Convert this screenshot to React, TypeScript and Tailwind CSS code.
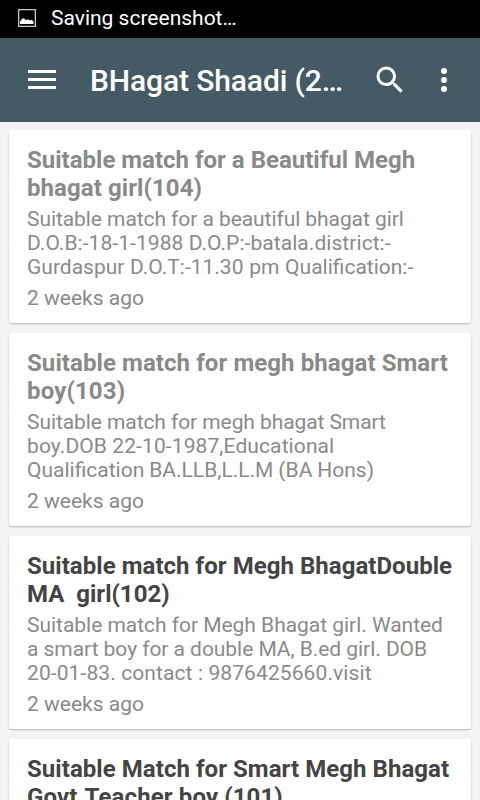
import React from "react";

type Line = { text: string; spacing?: string };
type Post = { title: Line[]; body: Line[]; read: boolean };

const posts: Post[] = [
  {
    title: [{ text: "Suitable match for a Beautiful Megh" }, { text: "bhagat girl(104)", spacing: "tracking-[0.08px]" }],
    body: [
      { text: "Suitable match for a beautiful bhagat girl", spacing: "tracking-[-0.07px]" },
      { text: "D.O.B:-18-1-1988 D.O.P:-batala.district:-", spacing: "tracking-[0.06px]" },
      { text: "Gurdaspur D.O.T:-11.30 pm Qualification:-", spacing: "[word-spacing:0.5px]" },
    ],
    read: true,
  },
  {
    title: [
      { text: "Suitable match for megh bhagat Smart", spacing: "tracking-[0.08px]" },
      { text: "boy(103)", spacing: "tracking-[0.15px]" },
    ],
    body: [
      { text: "Suitable match for megh bhagat Smart", spacing: "tracking-[-0.08px]" },
      { text: "boy.DOB 22-10-1987,Educational", spacing: "tracking-[0.1px]" },
      { text: "Qualification BA.LLB,L.L.M (BA Hons)", spacing: "[word-spacing:-0.25px]" },
    ],
    read: true,
  },
  {
    title: [{ text: "Suitable match for Megh BhagatDouble", spacing: "tracking-[0.04px]" }, { text: "MA  girl(102)" }],
    body: [
      { text: "Suitable match for Megh Bhagat girl. Wanted", spacing: "tracking-[-0.03px]" },
      { text: "a smart boy for a double MA, B.ed girl. DOB", spacing: "tracking-[-0.05px]" },
      { text: "20-01-83. contact : 9876425660.visit", spacing: "tracking-[0.1px]" },
    ],
    read: false,
  },
  {
    title: [
      { text: "Suitable Match for Smart Megh Bhagat", spacing: "tracking-[0.05px]" },
      { text: "Govt.Teacher boy (101)", spacing: "tracking-[0.12px]" },
    ],
    body: [],
    read: false,
  },
];

function Lines({ lines }: { lines: Line[] }) {
  return (
    <>
      {lines.map((line) => (
        <div key={line.text} className={line.spacing}>
          {line.text}
        </div>
      ))}
    </>
  );
}

function Card({ post }: { post: Post }) {
  return (
    <article className="h-[193px] shrink-0 rounded-[2px] bg-white px-[18px] pt-4 shadow-[0_1px_2px_rgba(0,0,0,0.25)]">
      <h2 className={`text-[24px] leading-7 font-bold whitespace-pre ${post.read ? "text-[#8a8a8a]" : "text-[#444444]"}`}>
        <Lines lines={post.title} />
      </h2>
      <div className="mt-[5px] text-[21px] leading-6 whitespace-pre text-[#8a8a8a]">
        <Lines lines={post.body} />
      </div>
      <div className="mt-[7px] text-[21px] leading-6 text-[#8a8a8a]">2 weeks ago</div>
    </article>
  );
}

export default function App() {
  return (
    <div className="flex h-[800px] w-[480px] flex-col overflow-hidden bg-[#f4f4f4] font-['Roboto',sans-serif]">
      <div className="flex h-[38px] shrink-0 items-center bg-black pb-0.5 pl-[18px] text-white">
        <svg width="18" height="18" viewBox="0 0 18 18">
          <path fill="none" stroke="#c8c8c8" strokeWidth="1.3" d="M.65.65h16.700v16.700H.65z" />
          <path fill="#fff" d="M2 15v-2.500l2.500-3 1.500-.3 2 2 1.800-1 2.200 1.300 1.800-.7 1.700 2V15z" />
        </svg>
        <span className="ml-[15px] text-[21px] leading-6">Saving screenshot…</span>
      </div>
      <header className="flex h-[84px] shrink-0 items-center bg-[#455a64] pl-[27px] text-white">
        <svg width="30" height="20" viewBox="0 0 30 20">
          <path fill="#fff" d="M1 0h28v3H1zM1 8h28v3H1zM1 16h28v3H1z" />
        </svg>
        <h1 className="ml-[33px] w-[260px] pt-0.5 text-[30px] leading-9 font-medium tracking-[-0.12px] whitespace-nowrap">BHagat Shaadi (2…</h1>
        <svg className="ml-[22px]" width="36" height="36" viewBox="0 0 24 24">
          <path fill="#fff" d="M15.500 14h-.79l-.28-.27A6.470 6.470 0 0 0 16 9.500 6.500 6.500 0 1 0 9.500 16c1.610 0 3.090-.59 4.230-1.570l.27.28v.79l5 4.990L20.490 19l-4.990-5zm-6 0C7.010 14 5 11.990 5 9.500S7.010 5 9.500 5 14 7.010 14 9.500 11.990 14 9.500 14z" />
        </svg>
        <svg className="ml-[18px]" width="36" height="36" viewBox="0 0 24 24">
          <path fill="#fff" d="M12 8a2 2 0 1 0 0-4 2 2 0 0 0 0 4zm0 2a2 2 0 1 0 0 4 2 2 0 0 0 0-4zm0 6a2 2 0 1 0 0 4 2 2 0 0 0 0-4z" />
        </svg>
      </header>
      <main className="flex flex-col gap-[10px] px-[9px] pt-2">
        {posts.map((post) => (
          <Card key={post.title[0].text} post={post} />
        ))}
      </main>
    </div>
  );
}
